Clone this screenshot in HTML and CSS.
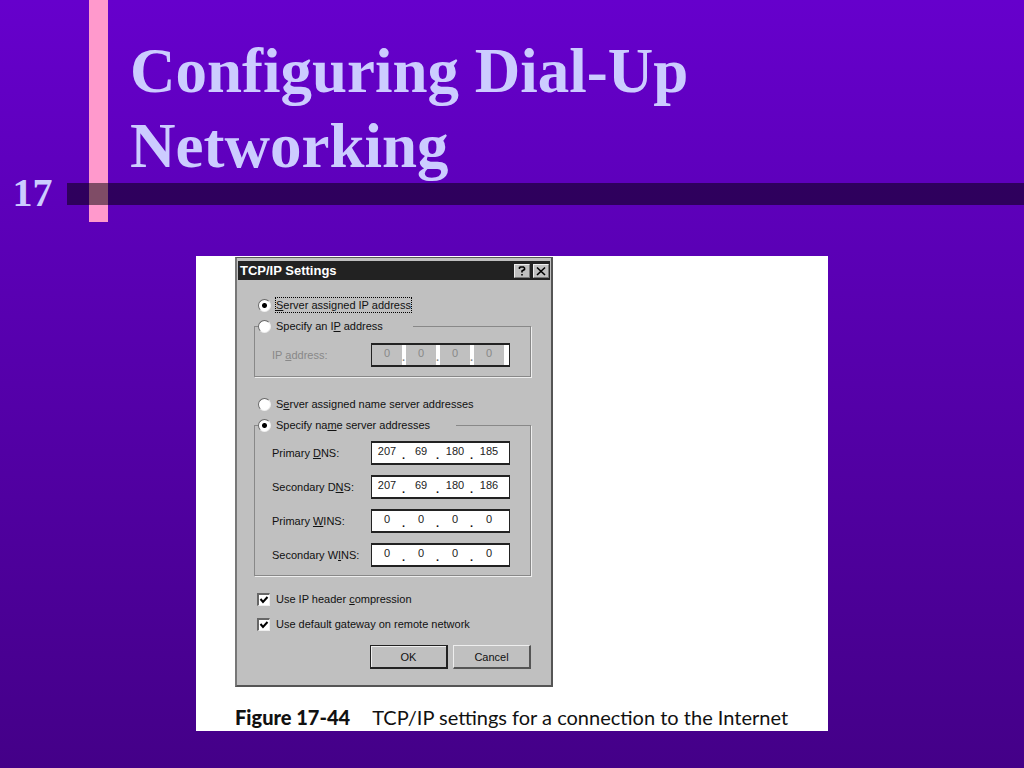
FILE: index.html
```
<!DOCTYPE html>
<html lang="en">
<head>
    <meta charset="UTF-8">
    <meta name="viewport" content="width=device-width, initial-scale=1.0">
    <title>Configuring Dial-Up Networking</title>
    <link rel="stylesheet" href="styles.css">
</head>
<body>
    <header class="slide-header">
        <div class="bar-vertical"></div>
        <div class="bar-horizontal"></div>
        <div class="chapter">17</div>
        <h1>Configuring Dial-Up Networking</h1>
    </header>

    <figure class="figure">
        <form class="dialog">
            <div class="title-bar">
                <h2>TCP/IP Settings</h2>
                <button type="button" class="title-button" aria-label="Help">
                    <svg width="10" height="10" viewBox="0 0 10 10"><path d="M2.5 3V1.5L3.5 1H6.5L7.5 2V3.5L5 5V6.5M5 8V9.5" fill="none" stroke="#000" stroke-width="1.6"/></svg>
                </button>
                <button type="button" class="title-button" aria-label="Close">
                    <svg width="10" height="10" viewBox="0 0 10 10"><path d="M1 1.5L9 9M9 1.5L1 9" fill="none" stroke="#000" stroke-width="1.6"/></svg>
                </button>
            </div>

            <div class="dialog-body">
                <div class="option">
                    <input type="radio" id="ip-server" name="ip-mode" checked>
                    <label for="ip-server" class="focused"><u>S</u>erver assigned IP address</label>
                </div>
                <fieldset class="ip-group">
                    <legend class="option">
                        <input type="radio" id="ip-specify" name="ip-mode">
                        <label for="ip-specify">Specify an I<u>P</u> address</label>
                    </legend>
                    <div class="field disabled">
                        <label for="ip-address">IP <u>a</u>ddress:</label>
                        <div class="address">
                            <input type="text" id="ip-address" value="0" disabled><span>.</span>
                            <input type="text" aria-label="IP address part 2" value="0" disabled><span>.</span>
                            <input type="text" aria-label="IP address part 3" value="0" disabled><span>.</span>
                            <input type="text" aria-label="IP address part 4" value="0" disabled>
                        </div>
                    </div>
                </fieldset>

                <div class="option">
                    <input type="radio" id="dns-server" name="dns-mode">
                    <label for="dns-server">S<u>e</u>rver assigned name server addresses</label>
                </div>
                <fieldset class="dns-group">
                    <legend class="option">
                        <input type="radio" id="dns-specify" name="dns-mode" checked>
                        <label for="dns-specify">Specify na<u>m</u>e server addresses</label>
                    </legend>
                    <div class="field">
                        <label for="primary-dns">Primary <u>D</u>NS:</label>
                        <div class="address">
                            <input type="text" id="primary-dns" value="207"><span>.</span>
                            <input type="text" aria-label="Primary DNS part 2" value="69"><span>.</span>
                            <input type="text" aria-label="Primary DNS part 3" value="180"><span>.</span>
                            <input type="text" aria-label="Primary DNS part 4" value="185">
                        </div>
                    </div>
                    <div class="field">
                        <label for="secondary-dns">Secondary D<u>N</u>S:</label>
                        <div class="address">
                            <input type="text" id="secondary-dns" value="207"><span>.</span>
                            <input type="text" aria-label="Secondary DNS part 2" value="69"><span>.</span>
                            <input type="text" aria-label="Secondary DNS part 3" value="180"><span>.</span>
                            <input type="text" aria-label="Secondary DNS part 4" value="186">
                        </div>
                    </div>
                    <div class="field">
                        <label for="primary-wins">Primary <u>W</u>INS:</label>
                        <div class="address">
                            <input type="text" id="primary-wins" value="0"><span>.</span>
                            <input type="text" aria-label="Primary WINS part 2" value="0"><span>.</span>
                            <input type="text" aria-label="Primary WINS part 3" value="0"><span>.</span>
                            <input type="text" aria-label="Primary WINS part 4" value="0">
                        </div>
                    </div>
                    <div class="field">
                        <label for="secondary-wins">Secondary W<u>I</u>NS:</label>
                        <div class="address">
                            <input type="text" id="secondary-wins" value="0"><span>.</span>
                            <input type="text" aria-label="Secondary WINS part 2" value="0"><span>.</span>
                            <input type="text" aria-label="Secondary WINS part 3" value="0"><span>.</span>
                            <input type="text" aria-label="Secondary WINS part 4" value="0">
                        </div>
                    </div>
                </fieldset>

                <div class="checks">
                    <div class="option">
                        <input type="checkbox" id="compression" checked>
                        <label for="compression">Use IP header <u>c</u>ompression</label>
                    </div>
                    <div class="option">
                        <input type="checkbox" id="gateway" checked>
                        <label for="gateway">Use default gateway on remote network</label>
                    </div>
                </div>

                <div class="actions">
                    <button type="button" class="button default">OK</button>
                    <button type="button" class="button">Cancel</button>
                </div>
            </div>
        </form>
        <figcaption><strong>Figure 17-44</strong>TCP/IP settings for a connection to the Internet</figcaption>
    </figure>
</body>
</html>
```
FILE: styles.css
```
* {
    box-sizing: border-box;
}

body {
    margin: 0;
    min-height: 100vh;
    background: linear-gradient(#6600cc, #440088);
    font-family: "Liberation Sans", Arial, sans-serif;
}

/* Slide heading with the crossed bars */
.slide-header {
    display: grid;
    grid-template-columns: 67px 22px 19px 1fr;
    grid-template-rows: 183px 22px 17px;
    color: #ccccff;
    font-family: "Liberation Serif", "Times New Roman", serif;
    font-weight: bold;
}

.bar-vertical {
    grid-column: 3;
    grid-row: 1 / 4;
    background-color: #ff99cc;
}

.bar-horizontal {
    grid-column: 2 / 5;
    grid-row: 2;
    background-color: rgba(0, 0, 0, 0.5);
}

.chapter {
    grid-column: 1;
    grid-row: 2;
    padding-right: 2px;
    font-size: 40px;
    line-height: 20px;
    text-align: center;
}

h1 {
    grid-column: 4;
    grid-row: 1 / 4;
    margin: 0;
    padding: 34px 60px 0 22px;
    font-size: 63px;
    line-height: 75px;
}

.figure {
    max-width: 632px;
    margin: 34px auto;
    padding: 1px 30px 0 39px;
    background-color: #ffffff;
}

/* Dialog window */
.dialog {
    max-width: 318px;
    border: 2px solid #555555;
    border-top-width: 1px;
    border-left-color: #777777;
    background-color: #c0c0c0;
    color: #111111;
    font-size: 11px;
    line-height: 16px;
}

.title-bar {
    display: flex;
    align-items: center;
    gap: 3px;
    height: 19px;
    margin: 3px 1px 0;
    padding: 0 1px 0 2px;
    background-color: #222222;
}

.title-bar h2 {
    flex: 1;
    margin: 0;
    color: #ffffff;
    font-size: 13px;
}

.title-button {
    display: flex;
    align-items: center;
    justify-content: center;
    width: 16px;
    height: 14px;
    padding: 0;
    border: 1px solid #eeeeee;
    border-right-color: #777777;
    border-bottom-color: #777777;
    background-color: #c0c0c0;
}

.dialog-body {
    padding: 17px 20px 16px 17px;
}

.option {
    display: flex;
    align-items: center;
    gap: 5px;
    height: 16px;
    padding-left: 4px;
}

.option input {
    appearance: none;
    width: 13px;
    height: 13px;
    margin: 0;
    border: 1px solid #666666;
    border-right-color: #eeeeee;
    border-bottom-color: #eeeeee;
    background-color: #ffffff;
}

.option input[type="radio"] {
    border-radius: 50%;
}

.option input[type="radio"]:checked {
    background-image: radial-gradient(circle, #000000 2px, transparent 3px);
}

.option input[type="checkbox"] {
    border-width: 2px 1px 1px 2px;
    background-image: url("data:image/svg+xml,%3Csvg xmlns='http://www.w3.org/2000/svg' viewBox='0 0 10 10'%3E%3Cpath d='M1.5 4L4 7L8.5 2' fill='none' stroke='black' stroke-width='2'/%3E%3C/svg%3E");
}

.focused {
    outline: 1px dotted #000000;
    line-height: 14px;
}

fieldset {
    margin: 5px 0 0;
    padding: 0 20px 0 17px;
    border: 1px solid #888888;
    box-shadow: 1px 1px 0 #eeeeee;
}

legend.option {
    margin-left: -14px;
    padding: 0;
}

.ip-group {
    margin-bottom: 19px;
    padding-top: 9px;
    padding-bottom: 9px;
}

.ip-group legend {
    width: 155px;
}

.dns-group {
    padding-top: 8px;
    padding-bottom: 8px;
}

.dns-group legend {
    width: 198px;
}

.field {
    display: flex;
    align-items: center;
    justify-content: space-between;
}

.field + .field {
    margin-top: 10px;
}

.address {
    display: flex;
    height: 24px;
    padding-right: 5px;
    border: 2px solid #222222;
    border-left-width: 1px;
    border-right-width: 1px;
    background-color: #ffffff;
}

.address input {
    width: 30px;
    padding: 0 0 4px;
    border: 0;
    background-color: transparent;
    color: #222222;
    font: inherit;
    text-align: center;
}

.address span {
    align-self: flex-end;
    width: 4px;
    font-weight: bold;
}

.disabled,
.disabled input {
    color: #888888;
}

.disabled .address input {
    background-color: #c0c0c0;
    color: #888888;
}

.checks {
    display: flex;
    flex-direction: column;
    gap: 9px;
    margin-top: 15px;
}

.checks .option {
    gap: 6px;
    padding-left: 3px;
}

.actions {
    display: flex;
    justify-content: flex-end;
    gap: 5px;
    margin-top: 13px;
}

.button {
    width: 78px;
    height: 24px;
    padding: 0;
    border: 1px solid #eeeeee;
    border-right: 2px solid #555555;
    border-bottom: 2px solid #555555;
    background-color: #c0c0c0;
    color: #111111;
    font: inherit;
}

.button.default {
    border-color: #222222;
    box-shadow: inset 1px 1px 0 #eeeeee;
}

figcaption {
    padding-top: 16px;
    color: #111111;
    font-family: Lato, sans-serif;
    font-size: 20px;
    line-height: 28px;
}

figcaption strong {
    margin-right: 22px;
    font-weight: 900;
}
```
